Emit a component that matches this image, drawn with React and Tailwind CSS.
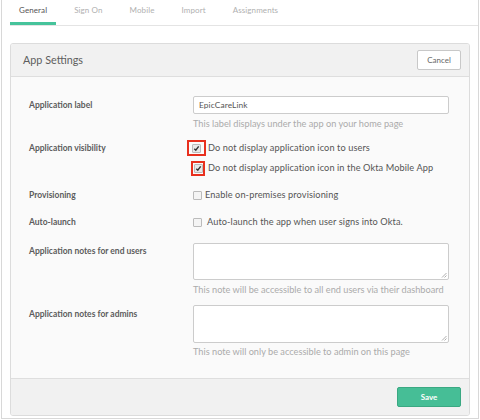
import React from "react";

const tabs = ["General", "Sign On", "Mobile", "Import", "Assignments"];

const Check = ({ checked }) => (
  <span
    className={`inline-flex w-[9px] h-[9px] items-center justify-center rounded-[1px] border border-[#bbb] ${
      checked ? "bg-[#e8e8e8]" : "bg-[#f4f4f4]"
    }`}
  >
    {checked && (
      <svg width="7" height="7" viewBox="0 0 8 8">
        <path d="M1.5 4.2 L3.2 6 L6.5 1.5" fill="none" stroke="#333" strokeWidth="1.6" />
      </svg>
    )}
  </span>
);

const Label = ({ children, className = "" }) => (
  <div className={`w-[164px] shrink-0 text-[8.5px] font-bold text-[#5c5c5c] ${className}`}>
    {children}
  </div>
);

const Help = ({ children, className = "" }) => (
  <div className={`text-[9.2px] leading-[12px] whitespace-nowrap text-[#ababab] ${className}`}>
    {children}
  </div>
);

const TextArea = ({ h }) => (
  <div className={`relative w-[256px] ${h} rounded-[2px] border border-[#ccc] bg-white`}>
    <svg className="absolute right-[1px] bottom-[1px]" width="6" height="6" viewBox="0 0 6 6">
      <path d="M5.5 1 L1 5.5 M5.5 3.5 L3.5 5.5" stroke="#999" strokeWidth="0.8" />
    </svg>
  </div>
);

export default function App() {
  return (
    <div className="w-[480px] h-[420px] bg-white">
      <div
        className="ml-[1px] w-[478px] h-[419px] border-x border-b border-[#d8d8d8]"
        style={{ fontFamily: "Lato, 'Open Sans', sans-serif" }}
      >
        {/* tabs */}
        <div className="ml-[8px] flex gap-[9px] border-b border-[#e4e4e4] h-[26px]">
          {tabs.map((t, i) => (
            <div
              key={t}
              className={`px-[9px] pt-[3px] text-[8px] tracking-[0.1px] leading-[14px] ${
                i === 0 ? "text-[#555] border-b-[3px] border-[#46c39b]" : "text-[#b0b0b0]"
              }`}
            >
              {t}
            </div>
          ))}
        </div>

        {/* panel */}
        <div className="mx-[8px] mt-[17px] rounded-[3px] border border-[#dcdcdc] overflow-hidden">
          <div className="h-[33px] bg-[#f1f1f1] border-b border-[#dedede] flex items-center justify-between pl-[12px] pr-[8px]">
            <div className="text-[10.8px] text-[#5e5e5e]">App Settings</div>
            <button className="w-[44px] h-[20px] rounded-[2px] border border-[#c8c8c8] bg-white text-[8px] text-[#666]">
              Cancel
            </button>
          </div>

          <div className="bg-[#fafafa] pl-[18px] pt-[19px] h-[301px]">
            {/* row 1 */}
            <div className="flex">
              <Label className="leading-[18px]">Application label</Label>
              <div>
                <div className="w-[256px] h-[18px] rounded-[2px] border border-[#ccc] bg-white pl-[5px] text-[8.4px] tracking-[0.1px] leading-[16px] text-[#555]">
                  EpicCareLink
                </div>
                <Help className="mt-[4px]">This label displays under the app on your home page</Help>
              </div>
            </div>

            {/* row 2 */}
            <div className="flex mt-[11px]">
              <Label className="leading-[14px]">Application visibility</Label>
              <div>
                <div className="flex items-center h-[14px] -ml-[6px] text-[9.2px] tracking-[0.1px] text-[#555]">
                  <span className="flex items-center justify-center w-[19px] h-[16px] border-2 border-[#e8301e]">
                    <Check checked />
                  </span>
                  <span className="ml-[2px]">Do not display application icon to users</span>
                </div>
                <div className="flex items-center h-[14px] mt-[6px] -ml-[2px] text-[9.2px] tracking-[0.1px] text-[#555]">
                  <span className="flex items-center justify-center w-[14px] h-[15px] border-2 border-[#e8301e]">
                    <Check checked />
                  </span>
                  <span className="ml-[3px]">Do not display application icon in the Okta Mobile App</span>
                </div>
              </div>
            </div>

            {/* row 3 */}
            <div className="flex mt-[13px]">
              <Label className="leading-[14px]">Provisioning</Label>
              <div className="flex items-center h-[14px] text-[9.2px] tracking-[0.1px] text-[#555]">
                <Check />
                <span className="ml-[3px]">Enable on-premises provisioning</span>
              </div>
            </div>

            {/* row 4 */}
            <div className="flex mt-[13px]">
              <Label className="leading-[14px]">Auto-launch</Label>
              <div className="flex items-center h-[14px] text-[9.2px] tracking-[0.1px] text-[#555]">
                <Check />
                <span className="ml-[5px]">Auto-launch the app when user signs into Okta.</span>
              </div>
            </div>

            {/* row 5 */}
            <div className="flex mt-[14px]">
              <Label className="leading-[14px] mt-[1px]">Application notes for end users</Label>
              <div>
                <TextArea h="h-[37px]" />
                <Help className="mt-[4px]">This note will be accessible to all end users via their dashboard</Help>
              </div>
            </div>

            {/* row 6 */}
            <div className="flex mt-[9px]">
              <Label className="leading-[14px] mt-[2px]">Application notes for admins</Label>
              <div>
                <TextArea h="h-[38px]" />
                <Help className="mt-[3px]">This note will only be accessible to admin on this page</Help>
              </div>
            </div>
          </div>

          <div className="h-[37px] bg-[#f1f1f1] border-t border-[#dedede] flex items-center justify-end pr-[8px]">
            <button className="w-[64px] h-[20px] rounded-[2px] bg-[#46be96] border border-[#3aa882] text-[8px] font-bold text-white">
              Save
            </button>
          </div>
        </div>
      </div>
    </div>
  );
}
